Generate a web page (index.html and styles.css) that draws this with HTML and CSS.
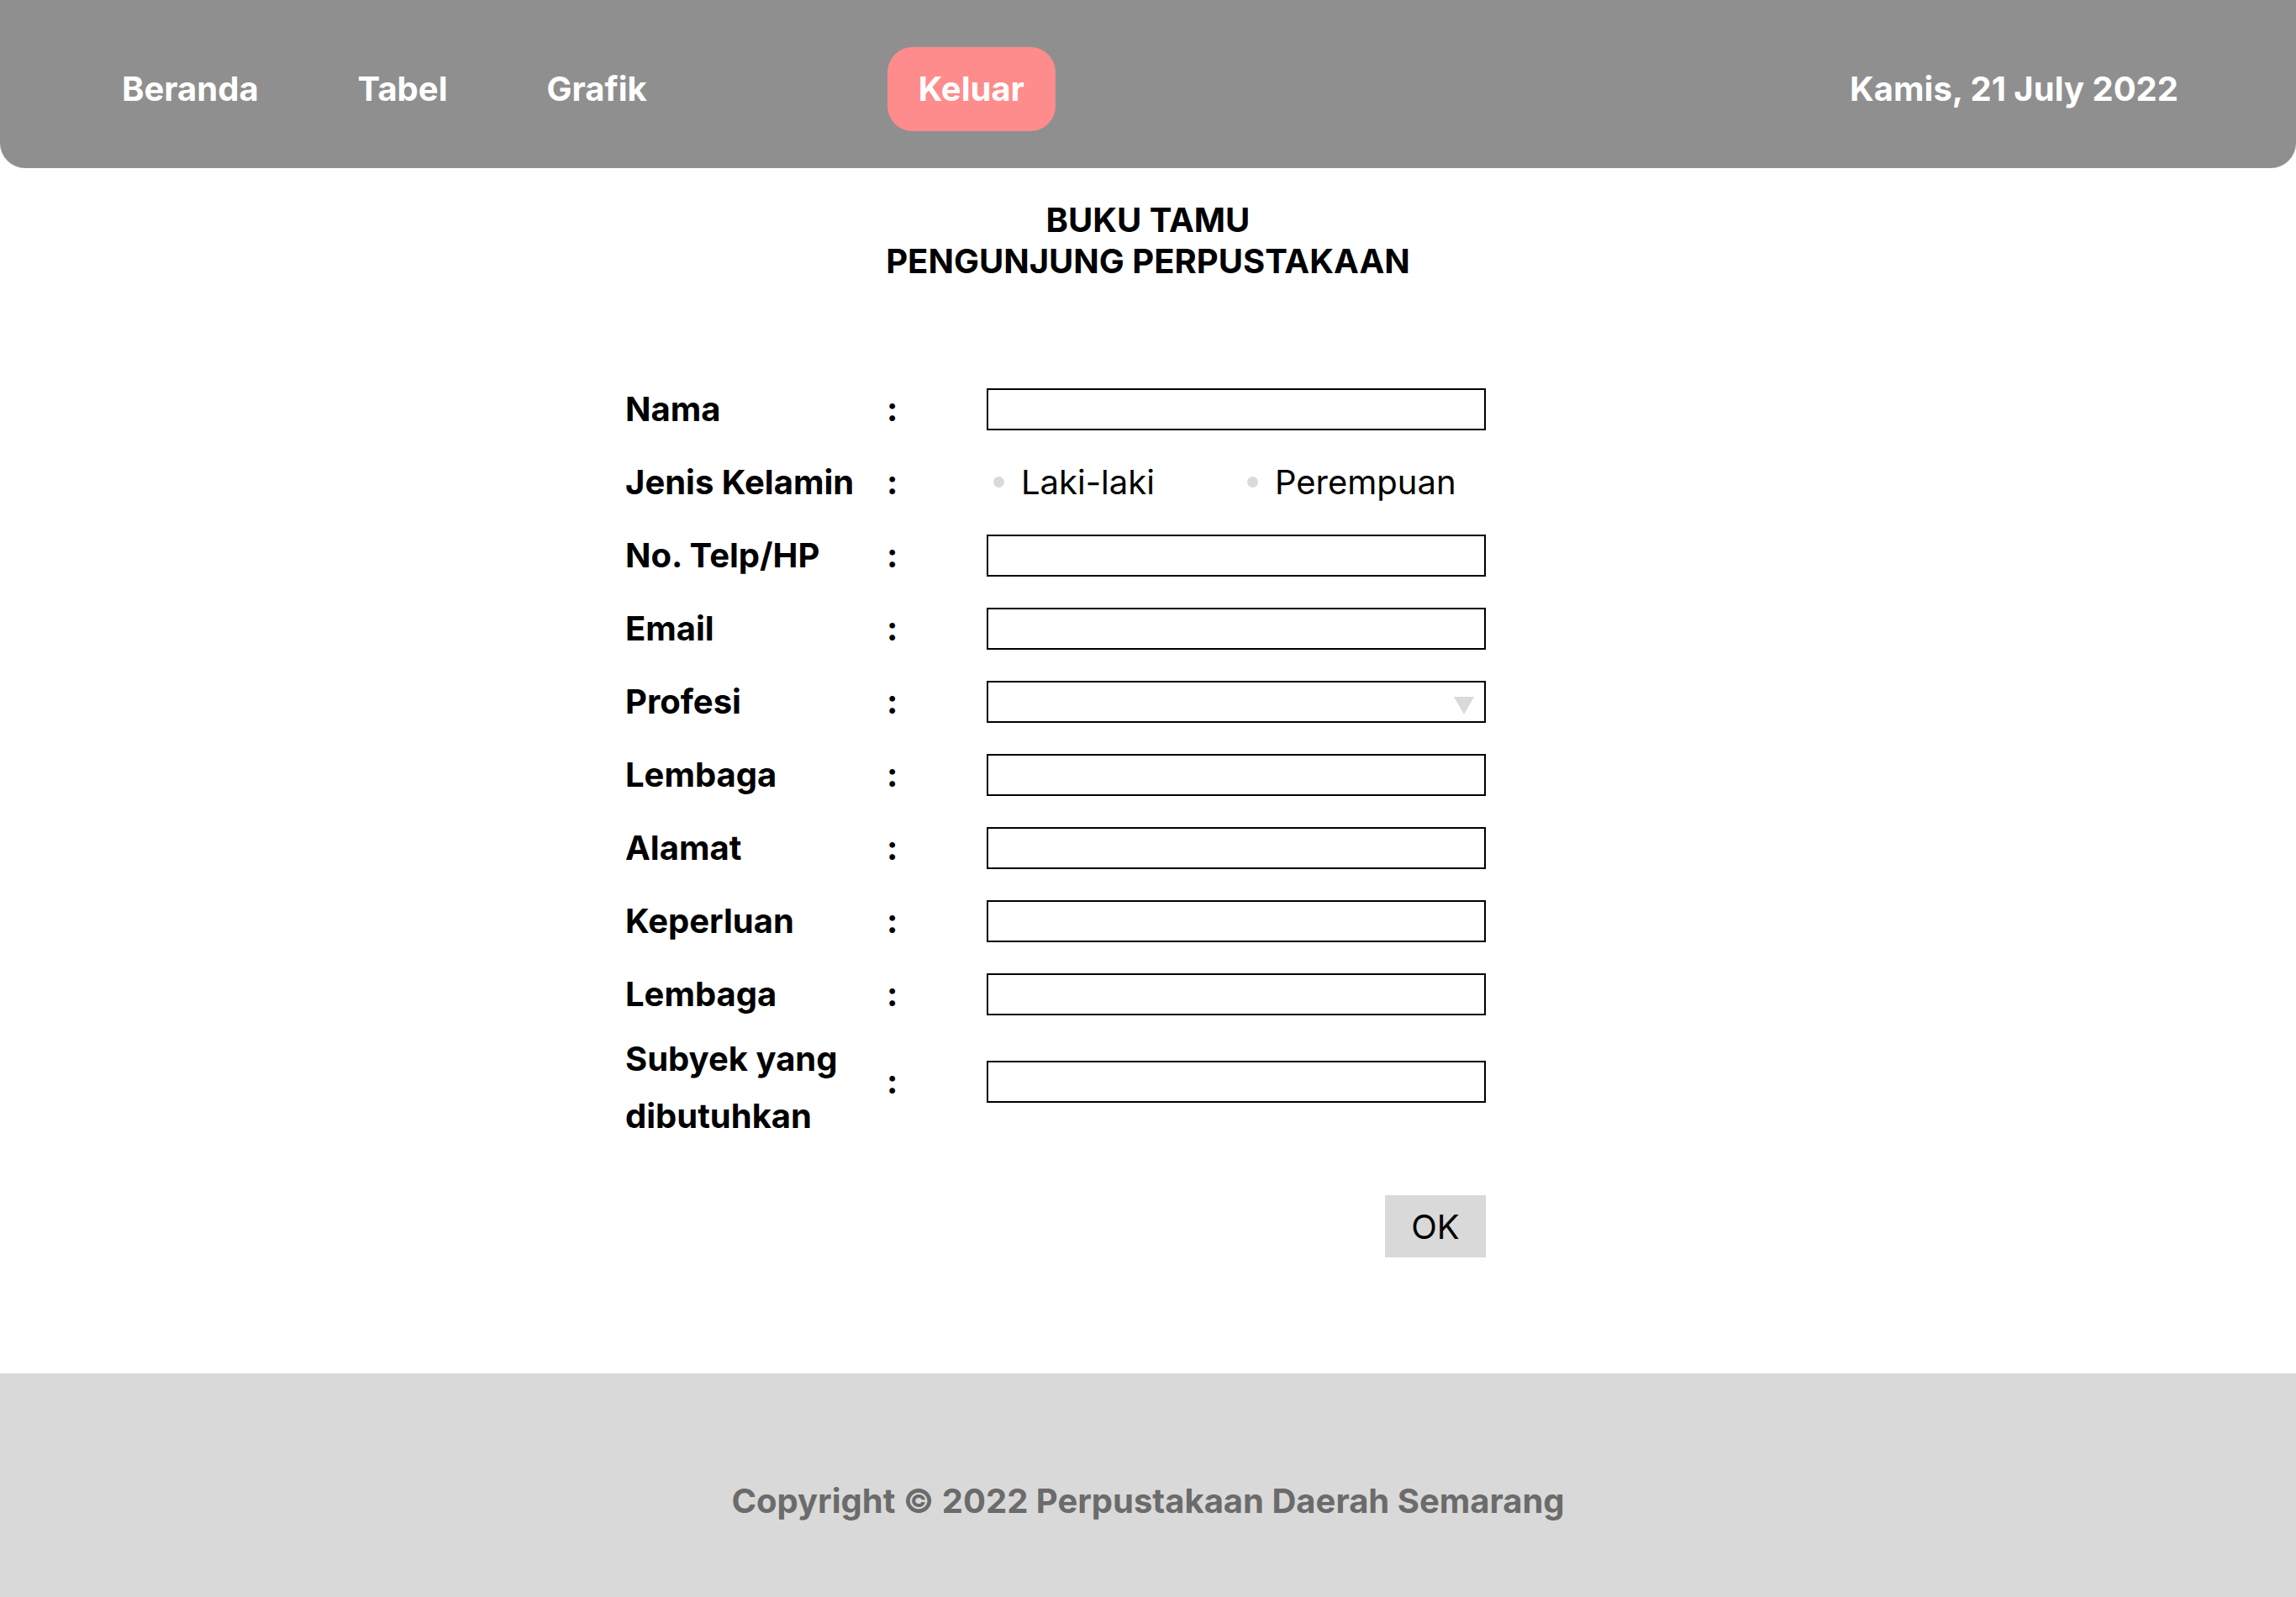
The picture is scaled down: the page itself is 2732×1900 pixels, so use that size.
FILE: index.html
```html
<!DOCTYPE html>
<html lang="id">
<head>
<meta charset="utf-8">
<title>Buku Tamu</title>
<link rel="stylesheet" href="styles.css">
</head>
<body>
<header class="topbar">
  <nav class="nav">
    <a class="nav-link" href="#">Beranda</a>
    <a class="nav-link" href="#">Tabel</a>
    <a class="nav-link" href="#">Grafik</a>
    <a class="nav-logout" href="#">Keluar</a>
  </nav>
  <div class="date">Kamis, 21 July 2022</div>
</header>

<main class="content">
  <h1 class="title">BUKU TAMU<br>PENGUNJUNG PERPUSTAKAAN</h1>

  <form class="guest-form">
    <label class="f-label">Nama</label><span class="f-colon">:</span>
    <input class="f-input" type="text">

    <span class="f-label">Jenis Kelamin</span><span class="f-colon">:</span>
    <div class="radios">
      <label class="radio"><span class="dot"></span>Laki-laki</label>
      <label class="radio"><span class="dot"></span>Perempuan</label>
    </div>

    <label class="f-label">No. Telp/HP</label><span class="f-colon">:</span>
    <input class="f-input" type="text">

    <label class="f-label">Email</label><span class="f-colon">:</span>
    <input class="f-input" type="text">

    <label class="f-label">Profesi</label><span class="f-colon">:</span>
    <div class="f-input f-select"><span class="caret"></span></div>

    <label class="f-label">Lembaga</label><span class="f-colon">:</span>
    <input class="f-input" type="text">

    <label class="f-label">Alamat</label><span class="f-colon">:</span>
    <input class="f-input" type="text">

    <label class="f-label">Keperluan</label><span class="f-colon">:</span>
    <input class="f-input" type="text">

    <label class="f-label">Lembaga</label><span class="f-colon">:</span>
    <input class="f-input" type="text">

    <label class="f-label f-label-wrap">Subyek yang dibutuhkan</label><span class="f-colon f-lift">:</span>
    <input class="f-input f-lift" type="text">

    <div class="actions"><button class="ok" type="button">OK</button></div>
  </form>
</main>

<footer class="footer">
  <p class="copyright">Copyright © 2022 Perpustakaan Daerah Semarang</p>
</footer>
</body>
</html>
```

FILE: styles.css
```css
* { box-sizing: border-box; }

html, body {
  margin: 0;
  padding: 0;
}

body {
  font-family: Inter, "Noto Sans", "Liberation Sans", sans-serif;
  color: #000;
  background: #fff;
  width: 2732px;
  height: 1900px;
  display: flex;
  flex-direction: column;
}

.topbar {
  height: 200px;
  background: #8f8f8f;
  border-radius: 0 0 30px 30px;
  display: flex;
  align-items: center;
  justify-content: space-between;
  padding: 12px 140px 0 145px;
}

.nav {
  display: flex;
  align-items: center;
  gap: 118px;
}

.nav-link,
.nav-logout,
.date {
  color: #fff;
  font-size: 40px;
  font-weight: 700;
  text-decoration: none;
  line-height: 48px;
}

.nav-logout {
  margin-left: 168px;
  background: #ff8c8c;
  border-radius: 30px;
  width: 200px;
  height: 100px;
  display: flex;
  align-items: center;
  justify-content: center;
}

.content {
  flex: 1;
  display: flex;
  flex-direction: column;
  align-items: center;
}

.title {
  margin: 37px 0 0;
  font-size: 40px;
  font-weight: 700;
  line-height: 49px;
  text-align: center;
}

.guest-form {
  align-self: flex-start;
  margin: 108px 0 0 744px;
  display: grid;
  grid-template-columns: 311px 119px 594px;
  grid-template-rows: repeat(9, 87px) 136px;
  align-items: center;
}

.f-label {
  font-size: 40px;
  font-weight: 700;
  line-height: 48px;
}

.f-label-wrap {
  line-height: 68px;
  width: 280px;
}

.f-colon {
  font-size: 40px;
  font-weight: 700;
  line-height: 48px;
}

.f-lift {
  margin-bottom: 14px;
}

.f-input {
  width: 594px;
  height: 50px;
  border: 2px solid #000;
  border-radius: 0;
  background: #fff;
  padding: 0 12px;
  font: inherit;
  font-size: 32px;
}

.f-select {
  display: flex;
  align-items: center;
  justify-content: flex-end;
  padding-right: 12px;
}

.caret {
  width: 0;
  height: 0;
  border-left: 12.5px solid transparent;
  border-right: 12.5px solid transparent;
  border-top: 21px solid #d9d9d9;
  margin-top: 10px;
}

.radios {
  display: flex;
  align-items: center;
  gap: 110px;
  padding-left: 8px;
}

.radio {
  display: flex;
  align-items: center;
  gap: 20px;
  font-size: 40px;
  font-weight: 400;
  line-height: 48px;
}

.dot {
  width: 13px;
  height: 13px;
  border-radius: 50%;
  background: #d9d9d9;
}

.actions {
  grid-column: 1 / -1;
  display: flex;
  justify-content: flex-end;
  padding-top: 60px;
}

.ok {
  width: 120px;
  height: 74px;
  background: #d9d9d9;
  border: 0;
  border-radius: 0;
  font-family: inherit;
  font-size: 40px;
  font-weight: 400;
  color: #000;
  padding: 0;
}

.footer {
  height: 266px;
  background: #d9d9d9;
  display: flex;
  align-items: center;
  justify-content: center;
  padding-top: 38px;
}

.copyright {
  margin: 0;
  font-size: 40px;
  font-weight: 700;
  color: #6b6b6b;
  line-height: 48px;
}
```
